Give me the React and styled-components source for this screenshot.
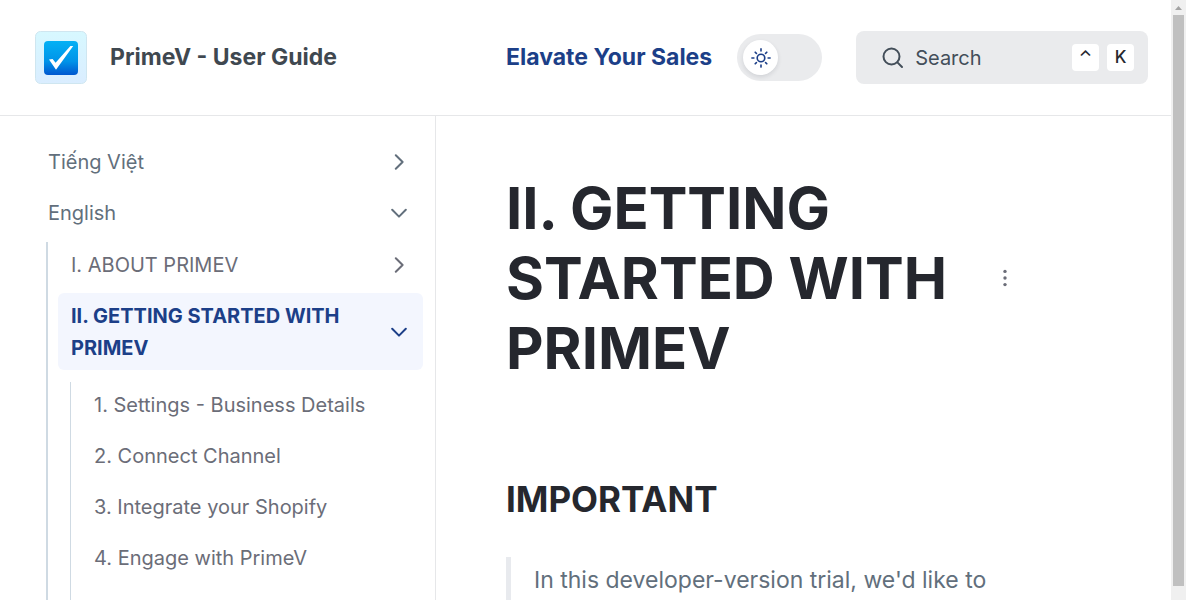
import React, { useState } from "react";
import styled, { createGlobalStyle } from "styled-components";

const GlobalStyle = createGlobalStyle`
  *, *::before, *::after { box-sizing: border-box; }
  body {
    margin: 0;
    background: #fff;
    color: #25272e;
    font-family: Inter, "Liberation Sans", sans-serif;
    overflow: hidden;
  }
  button, input { font: inherit; color: inherit; }
`;

const Shell = styled.div`
  display: flex;
  height: 100vh;
  overflow: hidden;
`;

const Page = styled.div`
  flex: 1;
  min-width: 0;
  display: flex;
  flex-direction: column;
`;

const Header = styled.header`
  display: flex;
  flex: none;
  align-items: center;
  height: 116px;
  padding-right: 23px;
  border-bottom: 1px solid #e6e7e9;
`;

const Brand = styled.a`
  display: flex;
  align-items: center;
  gap: 23px;
  flex: 0 0 506px;
  padding-left: 35px;
  color: #3f4850;
  font-size: 23px;
  font-weight: 700;
  line-height: 33px;
  text-decoration: none;
`;

const NavLink = styled.a`
  color: #1c3f88;
  font-size: 23px;
  font-weight: 700;
  line-height: 33px;
  text-decoration: none;
  white-space: nowrap;
`;

const Toggle = styled.button`
  display: flex;
  flex: none;
  align-items: center;
  justify-content: ${(p) => (p.$on ? "flex-end" : "flex-start")};
  width: 85px;
  height: 47px;
  margin-left: 25px;
  padding: 0 6px;
  border: 0;
  border-radius: 24px;
  background: #eaebed;
  cursor: pointer;
`;

const Knob = styled.span`
  display: grid;
  place-items: center;
  width: 35px;
  height: 35px;
  border-radius: 50%;
  background: #fff;
  color: #1c3f88;
  box-shadow: 0 2px 4px rgba(30, 40, 60, 0.12);
`;

const SearchBox = styled.label`
  display: flex;
  flex: 1;
  align-items: center;
  min-width: 0;
  height: 53px;
  margin-left: 34px;
  padding: 0 14px 0 26px;
  border-radius: 8px;
  background: #eaebed;
  color: #434e59;
`;

const SearchInput = styled.input`
  flex: 1;
  min-width: 0;
  margin-left: 11px;
  padding: 0;
  border: 0;
  outline: 0;
  background: transparent;
  font-size: 20px;
  line-height: 32px;
  &::placeholder { color: #434e59; opacity: 1; }
`;

const Key = styled.kbd`
  flex: none;
  width: 27px;
  height: 27px;
  margin-left: 8px;
  border-radius: 4px;
  background: #fff;
  color: #25272e;
  font-family: inherit;
  font-size: 17px;
  font-weight: 500;
  line-height: 27px;
  text-align: center;
`;

const Body = styled.div`
  display: flex;
  flex: 1;
  min-height: 0;
`;

const Sidebar = styled.nav`
  flex: 0 0 436px;
  padding: 23px 12px 0 35px;
  border-right: 1px solid #e6e7e9;
  overflow: hidden;
`;

const Tree = styled.ul`
  display: flex;
  flex-direction: column;
  gap: 6px;
  margin: 0;
  padding: 0;
  list-style: none;
`;

const Branch = styled(Tree)`
  margin: 7px 0 0 11px;
  padding: 0 0 80px 10px;
  border-left: 2px solid #cfdae3;
`;

const Leaves = styled(Tree)`
  margin: 12px 0 0 12px;
  padding: 0 0 60px 10px;
  border-left: 1px solid #cfdae3;
`;

const Row = styled.a`
  display: flex;
  align-items: center;
  justify-content: space-between;
  gap: 24px;
  padding: 7px 16px 6px 13px;
  border-radius: 6px;
  background: ${(p) => (p.$active ? "#f3f6fe" : "transparent")};
  color: ${(p) => (p.$active ? "#1c3f88" : p.$top ? "#626f7c" : "#6b6d78")};
  font-size: 20px;
  font-weight: ${(p) => (p.$active ? 700 : 400)};
  line-height: 32px;
  text-decoration: none;
`;

const Glyph = styled.svg`
  display: block;
  flex: none;
  fill: none;
  stroke: currentColor;
  stroke-width: ${(p) => p.$weight || 2};
  stroke-linecap: round;
  stroke-linejoin: round;
`;

const Main = styled.main`
  flex: 1;
  min-width: 0;
  padding: 57px 156px 0 70px;
  overflow: hidden;
`;

const TitleRow = styled.div`
  display: flex;
  align-items: center;
  justify-content: space-between;
`;

const Title = styled.h1`
  flex: 1;
  max-width: 460px;
  margin: 0;
  font-size: 58px;
  font-weight: 700;
  line-height: 70px;
`;

const MoreButton = styled.button`
  display: grid;
  place-items: center;
  width: 20px;
  height: 32px;
  padding: 0;
  border: 0;
  background: none;
  color: #6b6d78;
  cursor: pointer;
`;

const Heading = styled.h2`
  margin: 95px 0 0;
  font-size: 35px;
  font-weight: 700;
  line-height: 42px;
`;

const Quote = styled.blockquote`
  margin: 37px 0 0;
  padding: 3px 0 40px 23px;
  border-left: 5px solid #e8eaee;
  color: #626f7c;
  font-size: 23px;
  line-height: 40px;
`;

const ScrollTrack = styled.div`
  display: flex;
  flex: none;
  flex-direction: column;
  align-items: center;
  width: 15px;
  padding-bottom: 14px;
  background: #f0f0f0;
`;

const ScrollArrow = styled.svg`
  flex: none;
  display: block;
`;

const ScrollThumb = styled.div`
  flex: 1;
  width: 11px;
  background: #c0c0c0;
`;

function Logo() {
  return (
    <svg width="52" height="53" viewBox="0 0 52 53" role="img" aria-label="PrimeV">
      <defs>
        <linearGradient id="tile" x1="0" y1="0" x2="0" y2="1">
          <stop offset="0" stopColor="#d7f8ff" />
          <stop offset="1" stopColor="#daedff" />
        </linearGradient>
        <linearGradient id="box" x1="0" y1="0" x2="0" y2="1">
          <stop offset="0" stopColor="#03b1f5" />
          <stop offset="0.6" stopColor="#0093e8" />
          <stop offset="1" stopColor="#0057cf" />
        </linearGradient>
      </defs>
      <rect x="0.5" y="0.5" width="51" height="52" rx="5" fill="url(#tile)" stroke="#cfe6f0" />
      <rect x="9" y="10" width="34" height="34" rx="4" fill="url(#box)" />
      <path d="M14 28.4 L17.6 28 L20.6 31.8 L35.4 15 L38.2 15 L21 38.8 Z" fill="#fff" />
    </svg>
  );
}

function Sun() {
  return (
    <Glyph $weight={1.6} width="20" height="20" viewBox="0 0 20 20" aria-hidden="true">
      <circle cx="10" cy="10" r="3.8" />
      <path d="M10 0.9v2M10 17.1v2M0.9 10h2M17.1 10h2M4.2 4.2l1.2 1.2M14.6 14.6l1.2 1.2M4.2 15.8l1.2-1.2M14.6 5.4l1.2-1.2" />
    </Glyph>
  );
}

function Chevron({ open }) {
  return (
    <Glyph width="16" height="16" viewBox="0 0 16 16" aria-hidden="true">
      <path d={open ? "M1.2 4.8l6.8 6.8 6.8-6.8" : "M4.8 1.2l6.8 6.8-6.8 6.8"} />
    </Glyph>
  );
}

const leaves = [
  "1. Settings - Business Details",
  "2. Connect Channel",
  "3. Integrate your Shopify",
  "4. Engage with PrimeV",
];

export default function App() {
  const [dark, setDark] = useState(false);
  return (
    <>
      <GlobalStyle />
      <Shell>
        <Page>
          <Header>
            <Brand href="#home">
              <Logo />
              PrimeV - User Guide
            </Brand>
            <NavLink href="#sales">Elavate Your Sales</NavLink>
            <Toggle
              type="button"
              role="switch"
              aria-checked={dark}
              aria-label="Dark mode"
              $on={dark}
              onClick={() => setDark(!dark)}
            >
              <Knob>
                <Sun />
              </Knob>
            </Toggle>
            <SearchBox>
              <Glyph $weight={2} width="22" height="22" viewBox="0 0 22 22" aria-hidden="true">
                <circle cx="9.5" cy="9.5" r="8" />
                <path d="M15.4 15.4l4.6 4.6" />
              </Glyph>
              <SearchInput type="search" placeholder="Search" aria-label="Search" />
              <Key>⌃</Key>
              <Key>K</Key>
            </SearchBox>
          </Header>
          <Body>
            <Sidebar aria-label="Guide contents">
              <Tree>
                <li>
                  <Row href="#vi" $top>
                    Tiếng Việt
                    <Chevron />
                  </Row>
                </li>
                <li>
                  <Row href="#en" $top>
                    English
                    <Chevron open />
                  </Row>
                  <Branch>
                    <li>
                      <Row href="#about">
                        I. ABOUT PRIMEV
                        <Chevron />
                      </Row>
                    </li>
                    <li>
                      <Row href="#getting-started" $active aria-current="page">
                        II. GETTING STARTED WITH PRIMEV
                        <Chevron open />
                      </Row>
                      <Leaves>
                        {leaves.map((text) => (
                          <li key={text}>
                            <Row href="#getting-started">{text}</Row>
                          </li>
                        ))}
                      </Leaves>
                    </li>
                  </Branch>
                </li>
              </Tree>
            </Sidebar>
            <Main>
              <TitleRow>
                <Title>II. GETTING STARTED WITH PRIMEV</Title>
                <MoreButton type="button" aria-label="More actions">
                  <svg width="4" height="18" viewBox="0 0 4 18" fill="currentColor" aria-hidden="true">
                    <circle cx="2" cy="2.4" r="1.7" />
                    <circle cx="2" cy="9" r="1.7" />
                    <circle cx="2" cy="15.6" r="1.7" />
                  </svg>
                </MoreButton>
              </TitleRow>
              <Heading>IMPORTANT</Heading>
              <Quote>In this developer-version trial, we'd like to</Quote>
            </Main>
          </Body>
        </Page>
        <ScrollTrack aria-hidden="true">
          <ScrollArrow width="15" height="15" viewBox="0 0 15 15">
            <path d="M4 10l3.5-4 3.5 4z" fill="#a3a3a3" />
          </ScrollArrow>
          <ScrollThumb />
        </ScrollTrack>
      </Shell>
    </>
  );
}
